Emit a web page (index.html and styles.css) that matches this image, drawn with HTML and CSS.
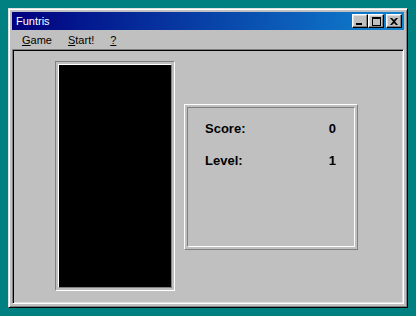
FILE: index.html
```html
<!DOCTYPE html>
<html lang="en">
<head>
    <meta charset="UTF-8">
    <title>Funtris</title>
    <link rel="stylesheet" href="styles.css">
</head>
<body>
    <div class="window">
        <!-- title bar -->
        <div class="titlebar">
            <span class="title">Funtris</span>
            <div class="controls">
                <button class="ctl">
                    <svg width="8" height="7" viewBox="0 0 8 7"><rect x="0" y="5" width="6" height="2" fill="#000"/></svg>
                </button>
                <button class="ctl">
                    <svg width="9" height="9" viewBox="0 0 9 9"><path d="M0 0h9v9h-9zM1 2v6h7v-6z" fill="#000" fill-rule="evenodd"/></svg>
                </button>
                <button class="ctl close">
                    <svg width="8" height="7" viewBox="0 0 8 7"><path d="M0 0h2l2 2 2-2h2l-3 3.5 3 3.5h-2l-2-2-2 2h-2l3-3.5z" fill="#000"/></svg>
                </button>
            </div>
        </div>

        <!-- menu -->
        <div class="menubar">
            <span class="menu"><u>G</u>ame</span>
            <span class="menu"><u>S</u>tart!</span>
            <span class="menu"><u>?</u></span>
        </div>

        <!-- client area -->
        <div class="client">
            <div class="well">
                <div class="well-inner"></div>
            </div>
            <div class="panel">
                <div class="panel-inner">
                    <div class="row"><span>Score:</span><span>0</span></div>
                    <div class="row"><span>Level:</span><span>1</span></div>
                </div>
            </div>
        </div>
    </div>
</body>
</html>
```

FILE: styles.css
```css
/* desktop */
body {
    margin: 0;
    background-color: #008080;
    font-family: "Liberation Sans", Arial, sans-serif;
}

/* window frame */
.window {
    margin: 8px;
    width: 400px;
    height: 300px;
    box-sizing: border-box;
    background-color: #c0c0c0;
    border: 1px solid;
    border-color: #dfdfdf #000 #000 #dfdfdf;
    box-shadow: inset 1px 1px #fff, inset -1px -1px #808080;
    padding: 3px;
    display: flex;
    flex-direction: column;
}

/* title bar */
.titlebar {
    height: 18px;
    background: linear-gradient(to right, #000080, #1084d0);
    display: flex;
    align-items: center;
    justify-content: space-between;
    padding: 0 2px 0 4px;
}

.title {
    color: #fff;
    font-size: 11px;
}

.controls {
    display: flex;
}

.ctl {
    width: 16px;
    height: 14px;
    padding: 0;
    margin: 0;
    background-color: #c0c0c0;
    border: 1px solid;
    border-color: #fff #000 #000 #fff;
    box-shadow: inset -1px -1px #808080, inset 1px 1px #dfdfdf;
    display: flex;
    align-items: center;
    justify-content: center;
}

.ctl.close {
    margin-left: 2px;
}

/* menu bar */
.menubar {
    height: 19px;
    display: flex;
    align-items: center;
    font-size: 11px;
    color: #000;
    padding-left: 10px;
}

.menu {
    margin-right: 16px;
}

/* client area */
.client {
    flex: 1;
    border: 1px solid;
    border-color: #808080 #fff #fff #808080;
    box-shadow: inset 1px 1px #000, inset -1px -1px #dfdfdf;
    padding: 11px 0 0 42px;
    display: flex;
    align-items: flex-start;
}

/* game well */
.well {
    border: 1px solid;
    border-color: #808080 #fff #fff #808080;
    padding: 2px;
}

.well-inner {
    width: 112px;
    height: 222px;
    background-color: #000;
    border: 1px solid;
    border-color: #fff #808080 #808080 #fff;
}

/* score panel */
.panel {
    margin: 43px 0 0 9px;
    width: 174px;
    height: 146px;
    box-sizing: border-box;
    border: 1px solid;
    border-color: #fff #808080 #808080 #fff;
    padding: 2px;
}

.panel-inner {
    height: 100%;
    box-sizing: border-box;
    border: 1px solid;
    border-color: #808080 #fff #fff #808080;
    padding: 13px 18px 0 17px;
}

.row {
    display: flex;
    justify-content: space-between;
    font-size: 13px;
    font-weight: bold;
    line-height: 16px;
    margin-bottom: 16px;
}
```
